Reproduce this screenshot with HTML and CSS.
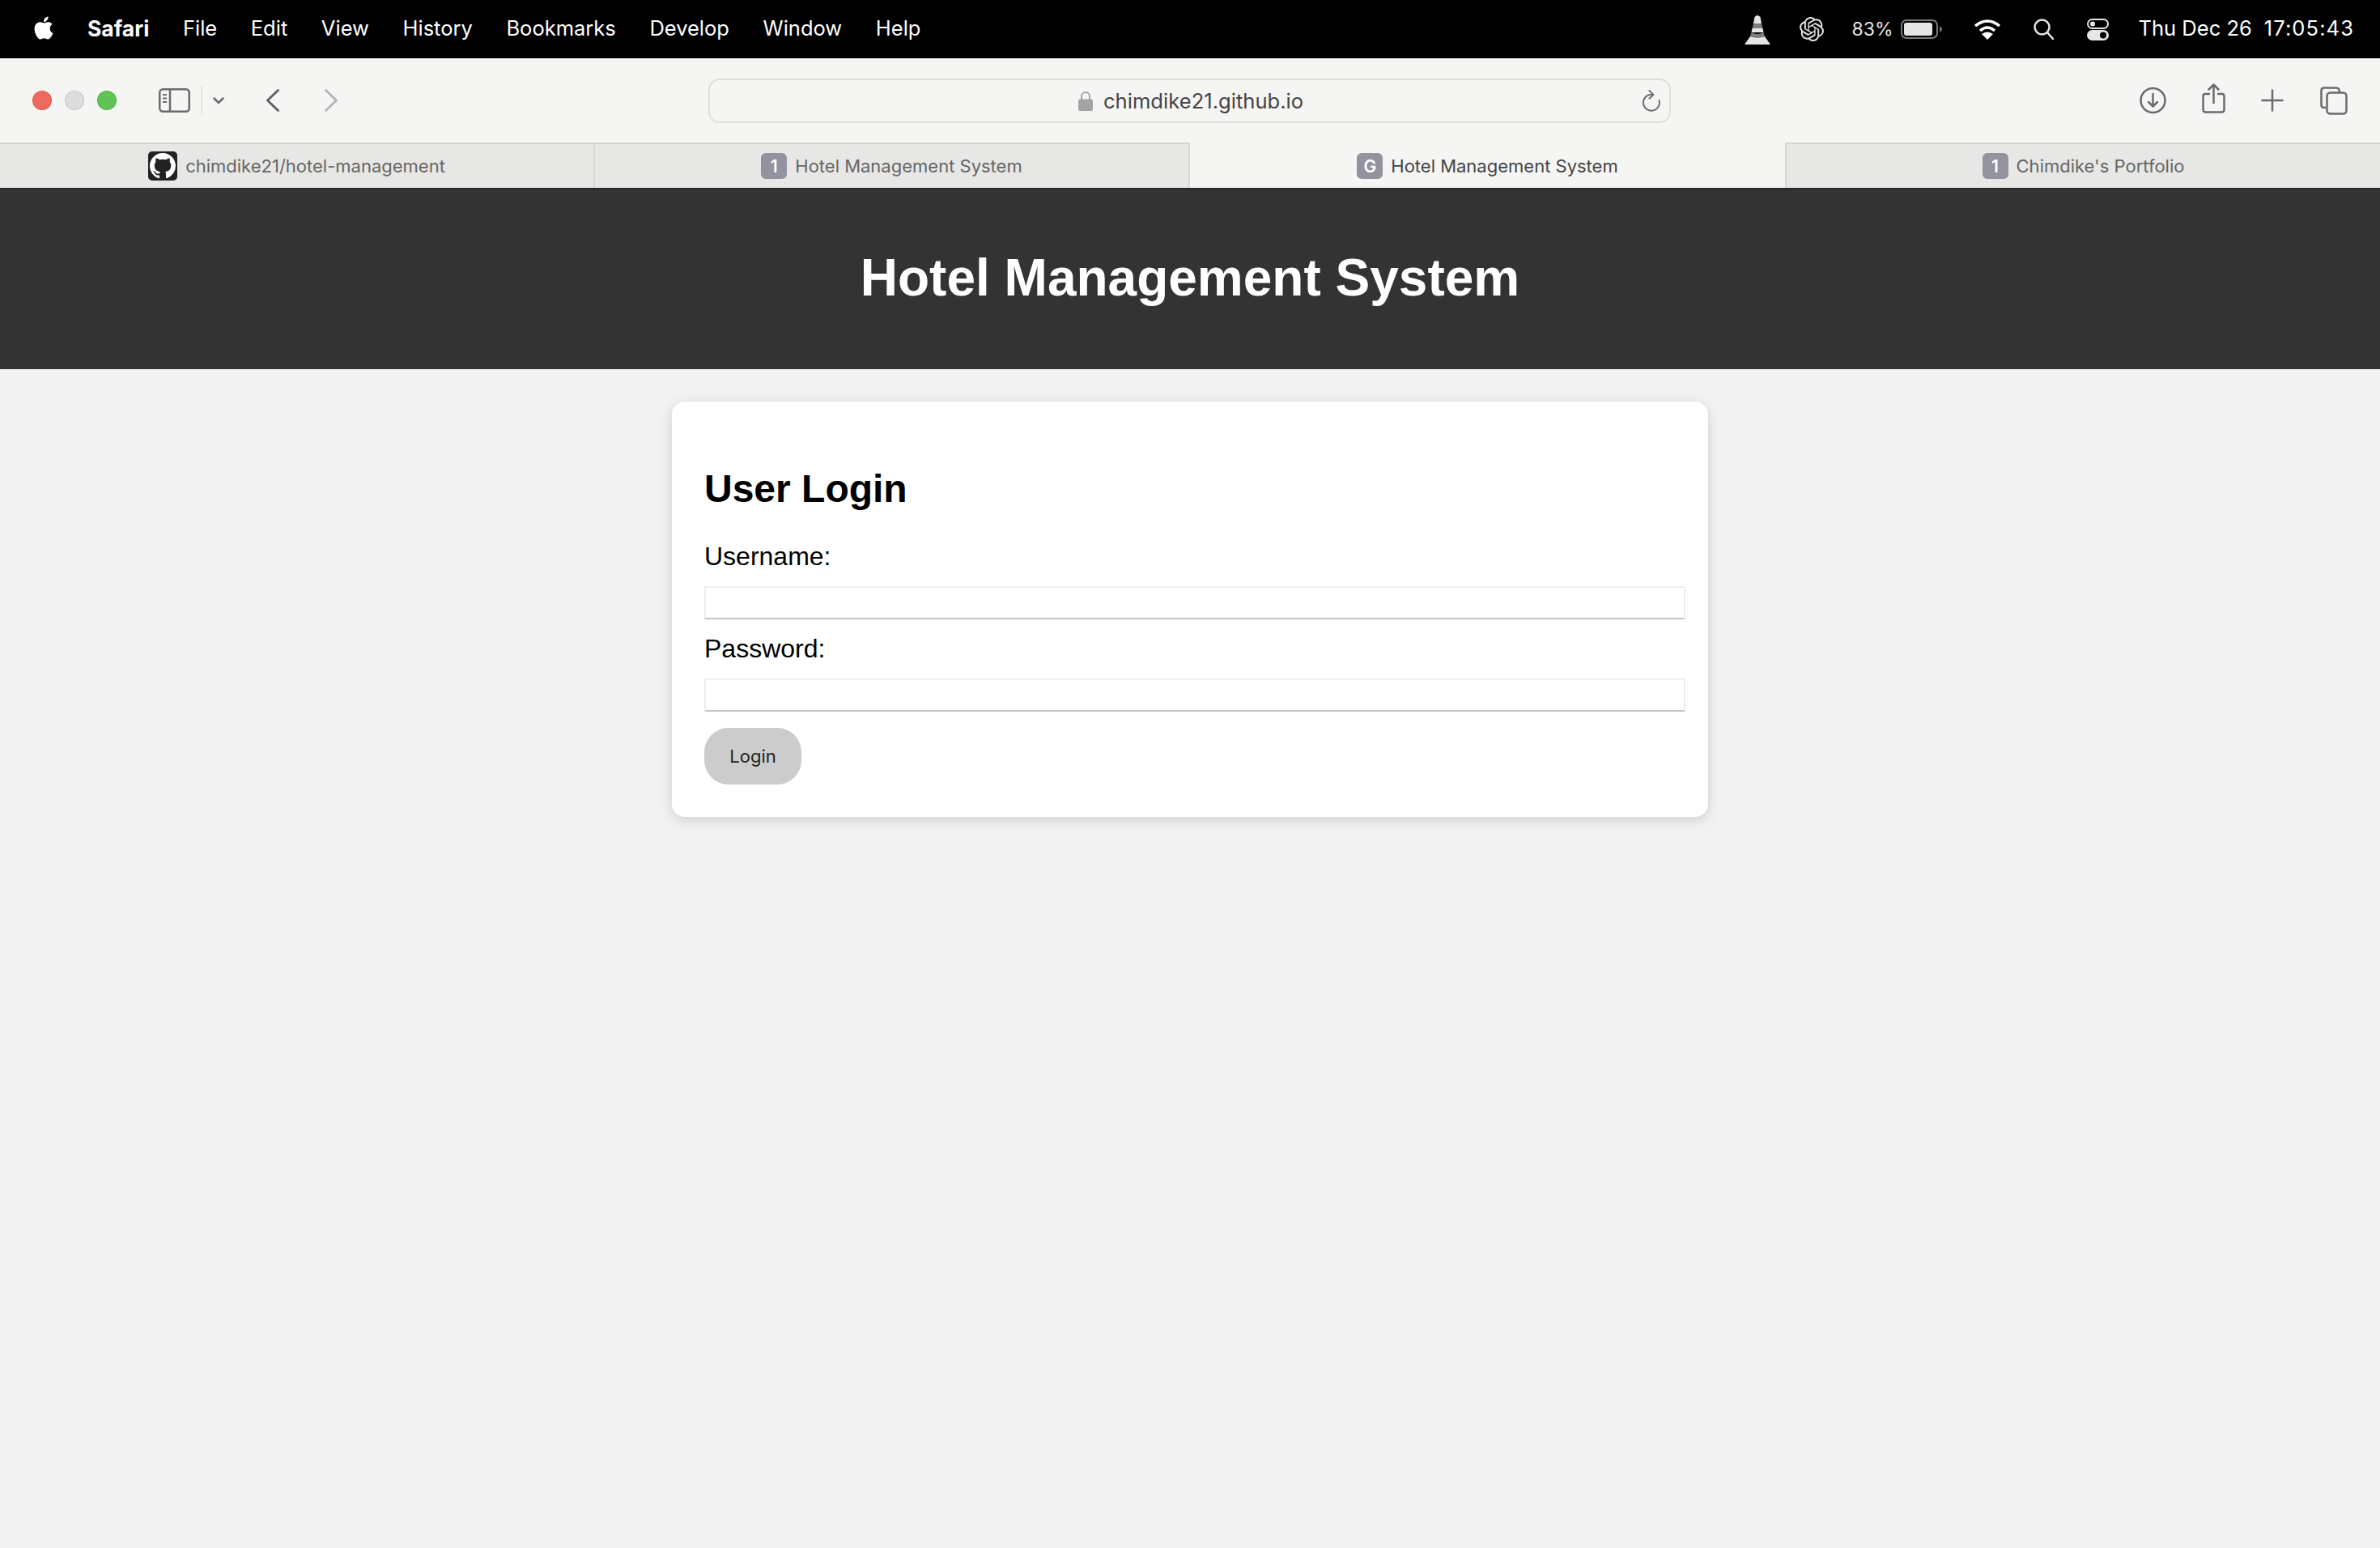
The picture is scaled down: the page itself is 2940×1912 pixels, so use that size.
FILE: index.html
```html
<!DOCTYPE html>
<html lang="en">
<head>
    <meta charset="UTF-8">
    <title>Hotel Management System</title>
    <link rel="stylesheet" href="styles.css">
</head>
<body>
    <div class="menubar">
        <svg class="apple" viewBox="0 0 24 24"><path fill="#fff" d="M12.152 6.896c-.948 0-2.415-1.078-3.96-1.04-2.04.027-3.91 1.183-4.961 3.014-2.117 3.675-.546 9.103 1.519 12.09 1.013 1.454 2.208 3.09 3.792 3.039 1.52-.065 2.09-.987 3.935-.987 1.831 0 2.35.987 3.96.948 1.637-.026 2.676-1.48 3.676-2.948 1.156-1.688 1.636-3.325 1.662-3.415-.039-.013-3.182-1.221-3.22-4.857-.026-3.04 2.48-4.494 2.597-4.559-1.429-2.09-3.623-2.324-4.39-2.376-2-.156-3.675 1.09-4.61 1.09zM15.53 3.83c.843-1.012 1.4-2.427 1.245-3.83-1.207.052-2.662.805-3.532 1.818-.78.896-1.454 2.338-1.273 3.714 1.338.104 2.715-.688 3.559-1.701"/></svg>
        <span class="menu-item app-name">Safari</span>
        <span class="menu-item">File</span>
        <span class="menu-item">Edit</span>
        <span class="menu-item">View</span>
        <span class="menu-item">History</span>
        <span class="menu-item">Bookmarks</span>
        <span class="menu-item">Develop</span>
        <span class="menu-item">Window</span>
        <span class="menu-item">Help</span>

        <div class="status">
            <svg class="st-cone" viewBox="0 0 32 37">
                <path fill="#e6e6e6" d="M12.5 3 Q16 -1 19.500 3 L21 11 H11Z"/>
                <path fill="#7d7d7d" d="M11 11 H21 L22.500 17 H9.500Z"/>
                <path fill="#e6e6e6" d="M9.500 17 H22.500 L23.500 22 H8.500Z"/>
                <path fill="#7d7d7d" d="M8.500 22 Q16 26 23.500 22 L25 27 Q16 30 7 27Z"/>
                <path fill="#e6e6e6" d="M7 27 Q16 30 25 27 L32 37 H0Z"/>
            </svg>
            <svg class="st-gpt" viewBox="0 0 24 24"><path fill="#e6e6e6" d="M22.2819 9.8211a5.9847 5.9847 0 0 0-.5157-4.9108 6.0462 6.0462 0 0 0-6.5098-2.9A6.0651 6.0651 0 0 0 4.9807 4.1818a5.9847 5.9847 0 0 0-3.9977 2.9 6.0462 6.0462 0 0 0 .7427 7.0966 5.98 5.98 0 0 0 .511 4.9107 6.051 6.051 0 0 0 6.5146 2.9001A5.9847 5.9847 0 0 0 13.2599 24a6.0557 6.0557 0 0 0 5.7718-4.2058 5.9894 5.9894 0 0 0 3.9977-2.9001 6.0557 6.0557 0 0 0-.7475-7.0729zm-9.022 12.6081a4.4755 4.4755 0 0 1-2.8764-1.0408l.1419-.0804 4.7783-2.7582a.7948.7948 0 0 0 .3927-.6813v-6.7369l2.02 1.1686a.071.071 0 0 1 .038.052v5.5826a4.504 4.504 0 0 1-4.4945 4.4944zm-9.6607-4.1254a4.4708 4.4708 0 0 1-.5346-3.0137l.142.0852 4.783 2.7582a.7712.7712 0 0 0 .7806 0l5.8428-3.3685v2.3324a.0804.0804 0 0 1-.0332.0615L9.74 19.9502a4.4992 4.4992 0 0 1-6.1408-1.6464zM2.3408 7.8956a4.485 4.485 0 0 1 2.3655-1.9728V11.6a.7664.7664 0 0 0 .3879.6765l5.8144 3.3543-2.0201 1.1685a.0757.0757 0 0 1-.071 0l-4.8303-2.7865A4.504 4.504 0 0 1 2.3408 7.872zm16.5963 3.8558L13.1038 8.364 15.1192 7.2a.0757.0757 0 0 1 .071 0l4.8303 2.7913a4.4944 4.4944 0 0 1-.6765 8.1042v-5.6772a.79.79 0 0 0-.407-.667zm2.0107-3.0231l-.142-.0852-4.7735-2.7818a.7759.7759 0 0 0-.7854 0L9.409 9.2297V6.8974a.0662.0662 0 0 1 .0284-.0615l4.8303-2.7866a4.4992 4.4992 0 0 1 6.6802 4.66zM8.3065 12.863l-2.02-1.1638a.0804.0804 0 0 1-.038-.0567V6.0742a4.4992 4.4992 0 0 1 7.3757-3.4537l-.142.0805L8.704 5.459a.7948.7948 0 0 0-.3927.6813zm1.0976-2.3654l2.602-1.4998 2.6069 1.4998v2.9994l-2.5974 1.4997-2.6067-1.4997Z"/></svg>
            <span class="st-pct">83%</span>
            <svg class="st-battery" viewBox="0 0 51 24">
                <rect x="1" y="1" width="44" height="22" rx="6" fill="none" stroke="#7a7a7a" stroke-width="2"/>
                <rect x="4" y="4" width="35" height="16" rx="3" fill="#e6e6e6"/>
                <path fill="#7a7a7a" d="M48 8 Q51 10 51 12 Q51 14 48 16Z"/>
            </svg>
            <svg class="st-wifi" viewBox="0 0 34 26" fill="none" stroke="#fff" stroke-width="3.500">
                <path d="M2 9 Q17 -3 32 9"/>
                <path d="M8 15 Q17 7 26 15"/>
                <path fill="#fff" stroke="none" d="M17 26 L10 19 Q17 14 24 19Z"/>
            </svg>
            <svg class="st-search" viewBox="0 0 25 26" fill="none" stroke="#e6e6e6" stroke-width="2.500">
                <circle cx="10.500" cy="10.500" r="9"/>
                <path d="M17 17 L24 25" stroke-linecap="round"/>
            </svg>
            <svg class="st-control" viewBox="0 0 27 27">
                <rect x="1" y="1" width="25" height="11" rx="5.500" fill="none" stroke="#e6e6e6" stroke-width="2"/>
                <circle cx="7" cy="6.500" r="3" fill="#e6e6e6"/>
                <rect y="14" width="27" height="13" rx="6.500" fill="#e6e6e6"/>
                <circle cx="20" cy="20.500" r="4" fill="#000"/>
            </svg>
            <span class="st-date">Thu Dec 26</span>
            <span class="st-time">17:05:43</span>
        </div>
    </div>

    <div class="toolbar">
        <span class="light light-red"></span>
        <span class="light light-gray"></span>
        <span class="light light-green"></span>

        <svg class="tb-sidebar" viewBox="0 0 39 30" fill="none" stroke="#6b6b6b" stroke-width="2.500">
            <rect x="1.250" y="1.250" width="36.500" height="27.500" rx="4"/>
            <path d="M14 1.500 V28.500"/>
            <path d="M5 8 H10 M5 12.500 H10 M5 17 H10" stroke-width="2"/>
        </svg>
        <span class="tb-divider"></span>
        <svg class="tb-chevron" viewBox="0 0 14 9" fill="none" stroke="#6b6b6b" stroke-width="2.500" stroke-linecap="round"><path d="M1.500 1.500 L7 7 L12.500 1.500"/></svg>
        <svg class="tb-back" viewBox="0 0 16 28" fill="none" stroke="#5f5f5f" stroke-width="2.800" stroke-linecap="round" stroke-linejoin="round"><path d="M14.500 1.500 L1.500 14 L14.500 26.500"/></svg>
        <svg class="tb-forward" viewBox="0 0 16 28" fill="none" stroke="#b4b4b4" stroke-width="2.800" stroke-linecap="round" stroke-linejoin="round"><path d="M1.500 1.500 L14.500 14 L1.500 26.500"/></svg>

        <div class="address">
            <svg class="lock" viewBox="0 0 18 25">
                <path d="M4 12 V7 A5 5 0 0 1 14 7 V12" fill="none" stroke="#a3a3a3" stroke-width="2"/>
                <rect y="10.500" width="18" height="14.500" rx="2.500" fill="#a3a3a3"/>
            </svg>
            <span class="url">chimdike21.github.io</span>
            <svg class="reload" viewBox="0 0 23 27" fill="none" stroke="#6f6f6f" stroke-width="2" stroke-linecap="round" stroke-linejoin="round">
                <path d="M14 6 A10 10 0 1 0 21.500 13"/>
                <path d="M9.500 1 L14.500 6 L9.500 10.500"/>
            </svg>
        </div>

        <svg class="tb-download" viewBox="0 0 33 34" fill="none" stroke="#6b6b6b" stroke-width="2.500" stroke-linecap="round" stroke-linejoin="round">
            <circle cx="16.500" cy="17" r="15"/>
            <path d="M16.500 9 V24 M11 19 L16.500 24.500 L22 19"/>
        </svg>
        <svg class="tb-share" viewBox="0 0 29 37" fill="none" stroke="#6b6b6b" stroke-width="2.500" stroke-linecap="round" stroke-linejoin="round">
            <path d="M9 13 H4 Q1.500 13 1.500 16 V32 Q1.500 35.500 4.500 35.500 H24.500 Q27.500 35.500 27.500 32 V16 Q27.500 13 25 13 H20"/>
            <path d="M14.500 24 V2 M8.500 7.500 L14.500 1.500 L20.500 7.500"/>
        </svg>
        <svg class="tb-plus" viewBox="0 0 28 28" stroke="#6b6b6b" stroke-width="2.500" stroke-linecap="round"><path d="M14 1.500 V26.500 M1.500 14 H26.500"/></svg>
        <svg class="tb-tabs" viewBox="0 0 34 35" fill="none" stroke="#6b6b6b" stroke-width="2.500" stroke-linejoin="round">
            <path d="M7 26 H5 Q1.500 26 1.500 22.500 V5 Q1.500 1.500 5 1.500 H20 Q24 1.500 24 7"/>
            <rect x="8.500" y="7.500" width="24" height="26" rx="4"/>
        </svg>
    </div>

    <div class="tabbar">
        <div class="tab">
            <svg class="favicon-gh" viewBox="0 0 36 36">
                <rect width="36" height="36" rx="5" fill="#222"/>
                <path transform="translate(2 2) scale(2)" fill="#fff" d="M8 0C3.580 0 0 3.580 0 8c0 3.540 2.290 6.530 5.470 7.590.4.070.55-.17.55-.38 0-.19-.01-.82-.01-1.490-2.010.37-2.530-.49-2.690-.94-.09-.23-.48-.94-.82-1.130-.28-.15-.68-.52-.01-.53.63-.01 1.080.58 1.230.82.72 1.210 1.870.87 2.330.66.07-.52.28-.87.51-1.070-1.780-.2-3.640-.89-3.640-3.950 0-.87.31-1.590.82-2.150-.08-.2-.36-1.020.08-2.120 0 0 .67-.21 2.200.82.64-.18 1.320-.27 2-.27.68 0 1.360.09 2 .27 1.530-1.040 2.200-.82 2.200-.82.44 1.100.16 1.920.08 2.120.51.56.82 1.270.82 2.150 0 3.070-1.870 3.750-3.650 3.950.29.25.54.73.54 1.480 0 1.070-.01 1.930-.01 2.200 0 .21.15.46.55.38A8.013 8.013 0 0016 8c0-4.420-3.580-8-8-8z"/>
            </svg>
            <span>chimdike21/hotel-management</span>
        </div>
        <div class="tab">
            <span class="favicon">1</span>
            <span>Hotel Management System</span>
        </div>
        <div class="tab tab-active">
            <span class="favicon">G</span>
            <span>Hotel Management System</span>
        </div>
        <div class="tab">
            <span class="favicon">1</span>
            <span>Chimdike's Portfolio</span>
        </div>
    </div>

    <header class="site-header">
        <h1>Hotel Management System</h1>
    </header>

    <main class="card">
        <h2>User Login</h2>
        <form>
            <label for="username">Username:</label>
            <input type="text" id="username">
            <label for="password">Password:</label>
            <input type="password" id="password">
            <button type="button">Login</button>
        </form>
    </main>
</body>
</html>
```

FILE: styles.css
```css
html, body {
    margin: 0;
    padding: 0;
}
body {
    width: 2940px;
    height: 1912px;
    overflow: hidden;
    background-color: #f2f2f2;
    font-family: "Liberation Sans", Arial, sans-serif;
}
svg {
    display: block;
    flex: none;
}

/* mac menu bar */
.menubar {
    display: flex;
    align-items: center;
    height: 72px;
    padding: 0 32px 3px 40px;
    box-sizing: border-box;
    background-color: #000;
    color: #fff;
    font-family: Inter, sans-serif;
    font-size: 25.5px;
}
.apple {
    width: 28px;
    height: 31px;
    margin-top: -1px;
}
.menu-item {
    margin-left: 41.6px;
}
.app-name {
    margin-left: 40px;
    font-size: 26.5px;
    font-weight: 700;
}
.status {
    display: flex;
    align-items: center;
    margin-left: auto;
    padding-top: 3px;
}
.st-cone { width: 32px; height: 37px; }
.st-gpt { width: 30px; height: 32px; margin-left: 36px; }
.st-pct { margin-left: 35px; font-size: 23px; color: #e6e6e6; }
.st-battery { width: 51px; height: 24px; margin-left: 9px; }
.st-wifi { width: 34px; height: 26px; margin-left: 39px; }
.st-search { width: 25px; height: 26px; margin-left: 40px; }
.st-control { width: 27px; height: 27px; margin-left: 41px; }
.st-date { margin-left: 37px; margin-top: -3px; }
.st-time { margin-left: 15px; letter-spacing: 1.1px; margin-top: -3px; }

/* safari toolbar */
.toolbar {
    display: flex;
    align-items: center;
    height: 104px;
    padding-left: 40px;
    box-sizing: border-box;
    background-color: #f5f5f3;
}
.light {
    width: 24px;
    height: 24px;
    margin-right: 16px;
    border-radius: 50%;
    box-sizing: border-box;
    border: 1px solid rgba(0, 0, 0, 0.1);
}
.light-red { background-color: #ee6a5f; }
.light-gray { background-color: #dcdcdc; }
.light-green { background-color: #5fc454; margin-right: 0; }
.tb-sidebar { width: 39px; height: 30px; margin-left: 52px; }
.tb-divider { width: 2px; height: 36px; margin-left: 13px; background-color: #e3e3e1; }
.tb-chevron { width: 14px; height: 9px; margin-left: 13px; }
.tb-back { width: 16px; height: 28px; margin-left: 52px; }
.tb-forward { width: 16px; height: 28px; margin-left: 56px; }
.address {
    display: flex;
    align-items: center;
    width: 1189px;
    height: 55px;
    margin-left: 458px;
    box-sizing: border-box;
    padding: 0 11px 0 455px;
    border: 2px solid #dededc;
    border-radius: 14px;
}
.lock { width: 18px; height: 25px; }
.url {
    margin-left: 13px;
    color: #444;
    font-family: Inter, sans-serif;
    font-size: 25.6px;
}
.reload { width: 23px; height: 27px; margin-left: auto; }
.tb-download { width: 33px; height: 34px; margin-left: 579px; }
.tb-share { width: 29px; height: 37px; margin-left: 44px; margin-top: -6px; }
.tb-plus { width: 28px; height: 28px; margin-left: 44px; }
.tb-tabs { width: 34px; height: 35px; margin-left: 45px; }

/* tabs */
.tabbar {
    display: grid;
    grid-template-columns: repeat(4, 1fr);
    height: 56px;
}
.tab {
    display: flex;
    align-items: center;
    justify-content: center;
    gap: 10px;
    box-sizing: border-box;
    background-color: #e7e7e5;
    border-top: 2px solid #d4d4d2;
    border-right: 2px solid #d8d8d6;
    color: #666;
    font-family: Inter, sans-serif;
    font-size: 22px;
}
.tab:last-child {
    border-right: none;
    border-left: 2px solid #d8d8d6;
}
.tab-active {
    background-color: #f5f5f3;
    border-top-color: #f5f5f3;
    border-right: none;
    color: #444;
}
.favicon {
    display: flex;
    align-items: center;
    justify-content: center;
    width: 32px;
    height: 32px;
    border-radius: 6px;
    background-color: #92939f;
    color: #fff;
    font-size: 21px;
    font-weight: 600;
}
.favicon-gh { width: 36px; height: 36px; }

/* page */
.site-header {
    padding: 32px 0;
    background-color: #333;
    border-top: 2px solid #282828;
    box-sizing: border-box;
    height: 224px;
    color: #fff;
    text-align: center;
}
.site-header h1 {
    margin: 40px 0;
    font-size: 64px;
    line-height: 74px;
}
.card {
    width: 1280px;
    height: 513px;
    margin: 40px auto 0;
    padding: 40px;
    box-sizing: border-box;
    background-color: #fff;
    border-radius: 16px;
    box-shadow: 0 4px 16px rgba(0, 0, 0, 0.15);
}
.card h2 {
    margin: 40px 0 38px;
    font-size: 48px;
    line-height: 55px;
}
.card label {
    display: block;
    font-size: 32px;
    line-height: 37px;
}
.card input {
    display: block;
    width: 1212px;
    height: 41px;
    margin: 18px 0 18px;
    box-sizing: border-box;
    padding: 0;
    background-color: #fff;
    border: 2px solid #eee;
    border-bottom-color: #c4c4c4;
}
.card button {
    display: block;
    width: 120px;
    height: 70px;
    margin-top: 20px;
    padding: 0;
    border: none;
    border-radius: 30px;
    background-color: #ccc;
    color: #222;
    font-family: Inter, sans-serif;
    font-size: 22px;
}
```
